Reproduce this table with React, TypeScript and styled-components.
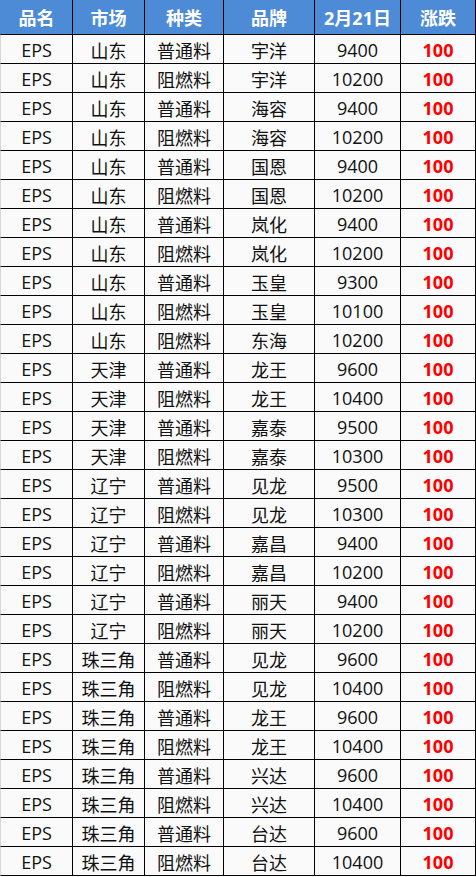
import styled, { createGlobalStyle } from "styled-components";

const GlobalStyle = createGlobalStyle`
  html, body {
    margin: 0;
    padding: 0;
    background: #ffffff;
  }
`;

const Table = styled.div`
  width: 476px;
  display: flex;
  flex-direction: column;
  font-family: "Open Sans", "Noto Sans CJK SC", sans-serif;
  background: #fafafa;
`;

const Row = styled.div<{ head?: boolean }>`
  display: grid;
  grid-template-columns: 73px 72px 79px 91px 86px 75px;
  height: ${({ head }) => (head ? "35px" : "29px")};
  background: ${({ head }) => (head ? "#4e8bd7" : "#fafafa")};
`;

const Cell = styled.div<{ head?: boolean; red?: boolean }>`
  display: flex;
  align-items: center;
  justify-content: center;
  box-sizing: border-box;
  border-right: 1px solid #000;
  border-bottom: 1px solid #000;
  font-size: 18px;
  font-weight: ${({ head, red }) => (head || red ? 700 : 400)};
  color: ${({ head, red }) => (head ? "#ffffff" : red ? "#ff0000" : "#111111")};
  white-space: nowrap;
  padding-top: ${({ head }) => (head ? "0" : "1px")};

  &:first-child {
    border-left: 1px solid ${({ head }) => (head ? "#4e8bd7" : "#d8d8d8")};
  }
`;

const headers = ["品名", "市场", "种类", "品牌", "2月21日", "涨跌"];

const rows: [string, string, string, string][] = [
  ["山东", "普通料", "宇洋", "9400"],
  ["山东", "阻燃料", "宇洋", "10200"],
  ["山东", "普通料", "海容", "9400"],
  ["山东", "阻燃料", "海容", "10200"],
  ["山东", "普通料", "国恩", "9400"],
  ["山东", "阻燃料", "国恩", "10200"],
  ["山东", "普通料", "岚化", "9400"],
  ["山东", "阻燃料", "岚化", "10200"],
  ["山东", "普通料", "玉皇", "9300"],
  ["山东", "阻燃料", "玉皇", "10100"],
  ["山东", "阻燃料", "东海", "10200"],
  ["天津", "普通料", "龙王", "9600"],
  ["天津", "阻燃料", "龙王", "10400"],
  ["天津", "普通料", "嘉泰", "9500"],
  ["天津", "阻燃料", "嘉泰", "10300"],
  ["辽宁", "普通料", "见龙", "9500"],
  ["辽宁", "阻燃料", "见龙", "10300"],
  ["辽宁", "普通料", "嘉昌", "9400"],
  ["辽宁", "阻燃料", "嘉昌", "10200"],
  ["辽宁", "普通料", "丽天", "9400"],
  ["辽宁", "阻燃料", "丽天", "10200"],
  ["珠三角", "普通料", "见龙", "9600"],
  ["珠三角", "阻燃料", "见龙", "10400"],
  ["珠三角", "普通料", "龙王", "9600"],
  ["珠三角", "阻燃料", "龙王", "10400"],
  ["珠三角", "普通料", "兴达", "9600"],
  ["珠三角", "阻燃料", "兴达", "10400"],
  ["珠三角", "普通料", "台达", "9600"],
  ["珠三角", "阻燃料", "台达", "10400"],
];

export default function App() {
  return (
    <>
      <GlobalStyle />
      <Table>
        <Row head>
          {headers.map((h) => (
            <Cell head key={h}>
              {h}
            </Cell>
          ))}
        </Row>
        {rows.map(([market, kind, brand, price], i) => (
          <Row key={i}>
            <Cell>EPS</Cell>
            <Cell>{market}</Cell>
            <Cell>{kind}</Cell>
            <Cell>{brand}</Cell>
            <Cell>{price}</Cell>
            <Cell red>100</Cell>
          </Row>
        ))}
      </Table>
    </>
  );
}
